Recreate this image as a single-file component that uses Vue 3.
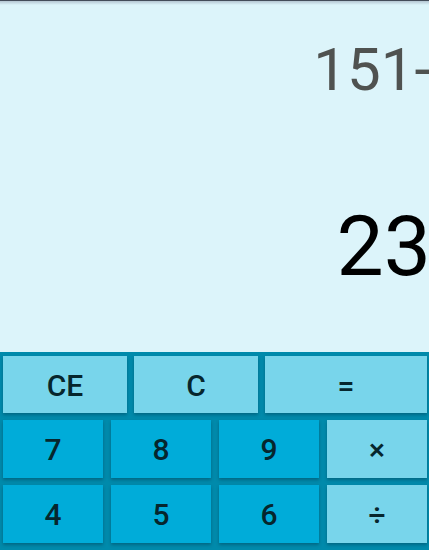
<script setup>
import { ref } from 'vue'

const expression = ref('151-')
const result = ref('23')
const rows = [
  [
    { label: 'CE', light: true, wide: 'two' },
    { label: 'C', light: true, wide: 'two' },
    { label: '=', light: true, wide: 'equals' },
  ],
  [{ label: '7' }, { label: '8' }, { label: '9' }, { label: '×', light: true }],
  [{ label: '4' }, { label: '5' }, { label: '6' }, { label: '÷', light: true }],
]
</script>

<template>
  <main class="calculator">
    <section class="display" aria-label="Display">
      <output class="expression">{{ expression }}</output>
      <output class="result">{{ result }}</output>
    </section>
    <section class="keypad" aria-label="Keypad">
      <div v-for="(row, i) in rows" :key="i" class="row" :class="{ functions: i === 0 }">
        <button
          v-for="key in row"
          :key="key.label"
          type="button"
          class="key"
          :class="[{ light: key.light }, key.wide]"
        >{{ key.label }}</button>
      </div>
    </section>
  </main>
</template>

<style>
body {
  margin: 0;
}
</style>

<style scoped>
.calculator {
  display: flex;
  flex-direction: column;
  min-height: 100vh;
  overflow: hidden;
  font-family: Roboto, sans-serif;
  background: #008aab;
}
.display {
  flex: 1;
  box-sizing: border-box;
  display: flex;
  flex-direction: column;
  align-items: flex-end;
  gap: 93px;
  padding-top: 34px;
  border-top: 1px solid #434c59;
  margin-right: -2px;
  background: linear-gradient(#b4c5d1, #dcf4fa 4px);
}
.expression {
  font-size: 60px;
  line-height: 70px;
  color: #4f5250;
}
.result {
  font-size: 84px;
  line-height: 98px;
  color: #000;
}
.keypad {
  display: flex;
  flex-direction: column;
  gap: 7px;
  padding: 4px 2px 7px 3px;
}
.row {
  display: flex;
  gap: 8px;
}
.functions {
  gap: 7px;
}
.key {
  flex: 1 1 0;
  min-width: 0;
  height: 58px;
  padding: 2px 0 0;
  border: 0;
  font: 500 30px/56px Roboto, sans-serif;
  color: #06262d;
  background: #00acd9;
  box-shadow: 0 2px 3px rgba(0, 40, 60, 0.35);
}
.functions .key {
  height: 57px;
}
.light {
  background: #78d5eb;
}
.two {
  flex-grow: 124;
}
.equals {
  flex-grow: 162;
}
</style>
